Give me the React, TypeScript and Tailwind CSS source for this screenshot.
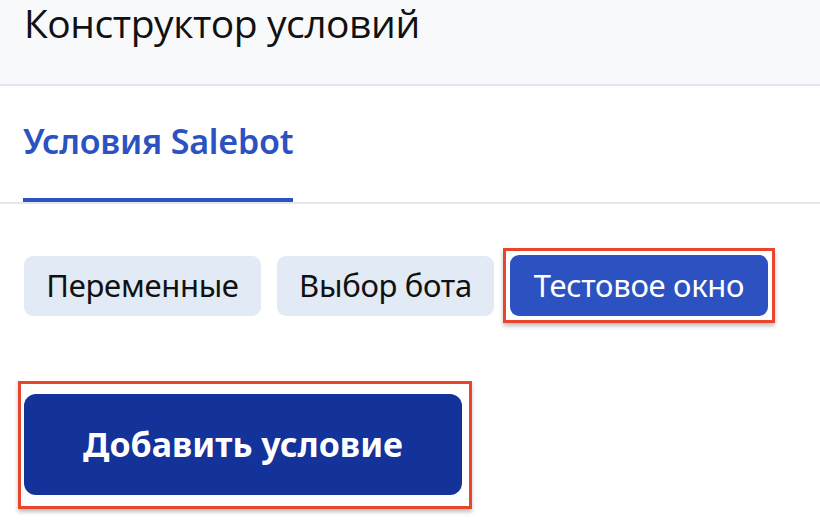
import React from "react";

export default function App() {
  return (
    <div
      className="w-[820px] h-[520px] bg-white overflow-hidden flex flex-col"
      style={{ fontFamily: '"Noto Sans", "Open Sans", sans-serif' }}
    >
      <div className="h-[86px] shrink-0 bg-[#f8f9fb] border-b-2 border-[#e1e5ee] flex items-start pl-[24px]">
        <h1 className="text-[39px] leading-[46px] text-[#111] tracking-[-0.45px] whitespace-nowrap" style={{ fontFamily: '"Open Sans", sans-serif' }}>
          Конструктор условий
        </h1>
      </div>
      <div className="h-[118px] shrink-0 border-b-2 border-[#e3e7ef] flex items-end pl-[23px]">
        <div className="flex flex-col items-stretch">
          <span className="text-[34px] leading-none font-semibold text-[#2c52c1] pb-[40px] tracking-[-0.2px] whitespace-nowrap" style={{ fontFamily: '"Noto Sans", sans-serif' }}>
            Условия Salebot
          </span>
          <div className="h-[4px] bg-[#2c52c1] w-[270px]" />
        </div>
      </div>
      <div className="flex items-center gap-[16px] pl-[24px] pt-[51px]">
        <div className="h-[60px] w-[237px] rounded-[9px] bg-[#e1eaf5] flex items-center justify-center text-[31px] text-[#111] tracking-[-0.3px]">
          Переменные
        </div>
        <div className="h-[60px] w-[217px] rounded-[9px] bg-[#e1eaf5] flex items-center justify-center text-[31px] text-[#111] tracking-[-0.3px]">
          Выбор бота
        </div>
        <div className="relative">
          <div className="absolute -inset-[7px] border-[3px] border-[#e8452d] shadow-[0_3px_4px_rgba(0,0,0,0.25)]" />
          <div className="relative h-[61px] w-[258px] rounded-[9px] bg-[#2c52c1] flex items-center justify-center text-[31px] text-white tracking-[-0.3px]">
            Тестовое окно
          </div>
        </div>
      </div>
      <div className="pl-[24px] pt-[78px]">
        <div className="relative w-[438px]">
          <div className="absolute left-[-6px] right-[-10px] top-[-13px] bottom-[-14px] border-[3px] border-[#e8452d] shadow-[0_3px_4px_rgba(0,0,0,0.25)]" />
          <div className="relative h-[101px] w-[438px] rounded-[12px] bg-[#13329a] flex items-center justify-center text-[34px] font-bold text-white">
            Добавить условие
          </div>
        </div>
      </div>
    </div>
  );
}
